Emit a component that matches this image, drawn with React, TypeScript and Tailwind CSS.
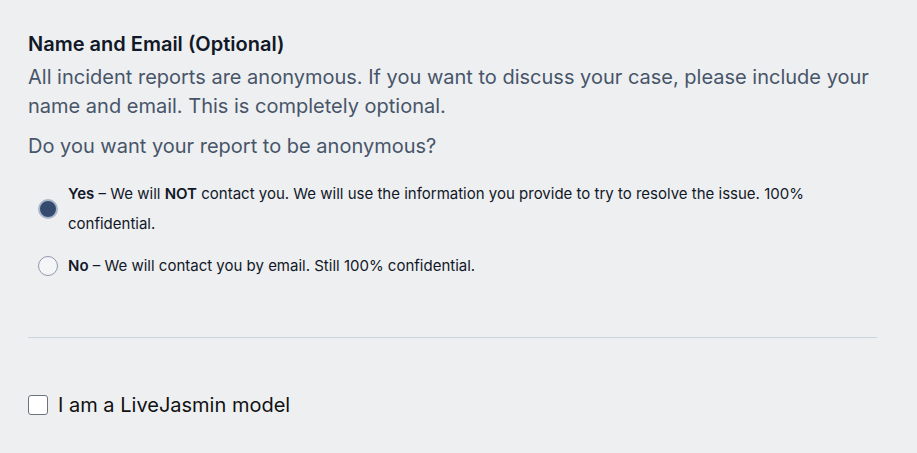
import { useState } from "react";

export default function App() {
  const [anon, setAnon] = useState("yes");
  const [model, setModel] = useState(false);

  return (
    <div className="min-h-screen bg-[#eeeff1] px-7 pt-[31px] font-['Inter',sans-serif]">
      <div className="w-[849px]">
        <h2 className="text-[20px] leading-[26px] font-semibold text-[#111827]">Name and Email (Optional)</h2>
        <p className="mt-[6px] text-[20px] leading-[29px] text-[#475569]">
          All incident reports are anonymous. If you want to discuss your case, please include your name and
          email. This is completely optional.
        </p>
        <p className="mt-[11px] text-[20px] leading-[29px] text-[#475569]">Do you want your report to be anonymous?</p>

        <div className="mt-[18px] flex flex-col gap-[12px] pl-[10px]">
          <label className="flex cursor-pointer items-center gap-[10px]">
            <Radio checked={anon === "yes"} onChange={() => setAnon("yes")} />
            <span className="text-[15px] leading-[30px] text-[#111827]">
              <b className="font-semibold">Yes</b> – We will <b className="font-semibold">NOT</b> contact you. We will
              use the information you provide to try to resolve the issue. 100% confidential.
            </span>
          </label>
          <label className="flex cursor-pointer items-center gap-[10px]">
            <Radio checked={anon === "no"} onChange={() => setAnon("no")} />
            <span className="text-[15px] leading-[30px] text-[#111827]">
              <b className="font-semibold">No</b> – We will contact you by email. Still 100% confidential.
            </span>
          </label>
        </div>

        <div className="mt-[56px] h-px bg-[#cbd5e1]" />

        <label className="mt-[55px] flex cursor-pointer items-center gap-[10px]">
          <span
            onClick={() => setModel(!model)}
            className="flex h-[20px] w-[20px] items-center justify-center rounded-[3px] border border-[#6b7280] bg-white"
          >
            {model && (
              <svg viewBox="0 0 16 16" className="h-3.5 w-3.5 text-[#334155]" fill="none" stroke="currentColor" strokeWidth="2.5">
                <path d="M3 8.5l3 3 7-7" />
              </svg>
            )}
          </span>
          <span className="text-[20px] leading-[24px] text-[#111111]">I am a LiveJasmin model</span>
        </label>
      </div>
    </div>
  );
}

function Radio({ checked, onChange }: { checked: boolean; onChange: () => void }) {
  return (
    <span
      onClick={onChange}
      className={
        checked
          ? "flex h-[20px] w-[20px] shrink-0 items-center justify-center rounded-full border-2 border-[#a9b6cc] bg-[#344a6e]"
          : "flex h-[20px] w-[20px] shrink-0 items-center justify-center rounded-full border border-[#8d99ae] bg-[#f4f5f7]"
      }
    />
  );
}
